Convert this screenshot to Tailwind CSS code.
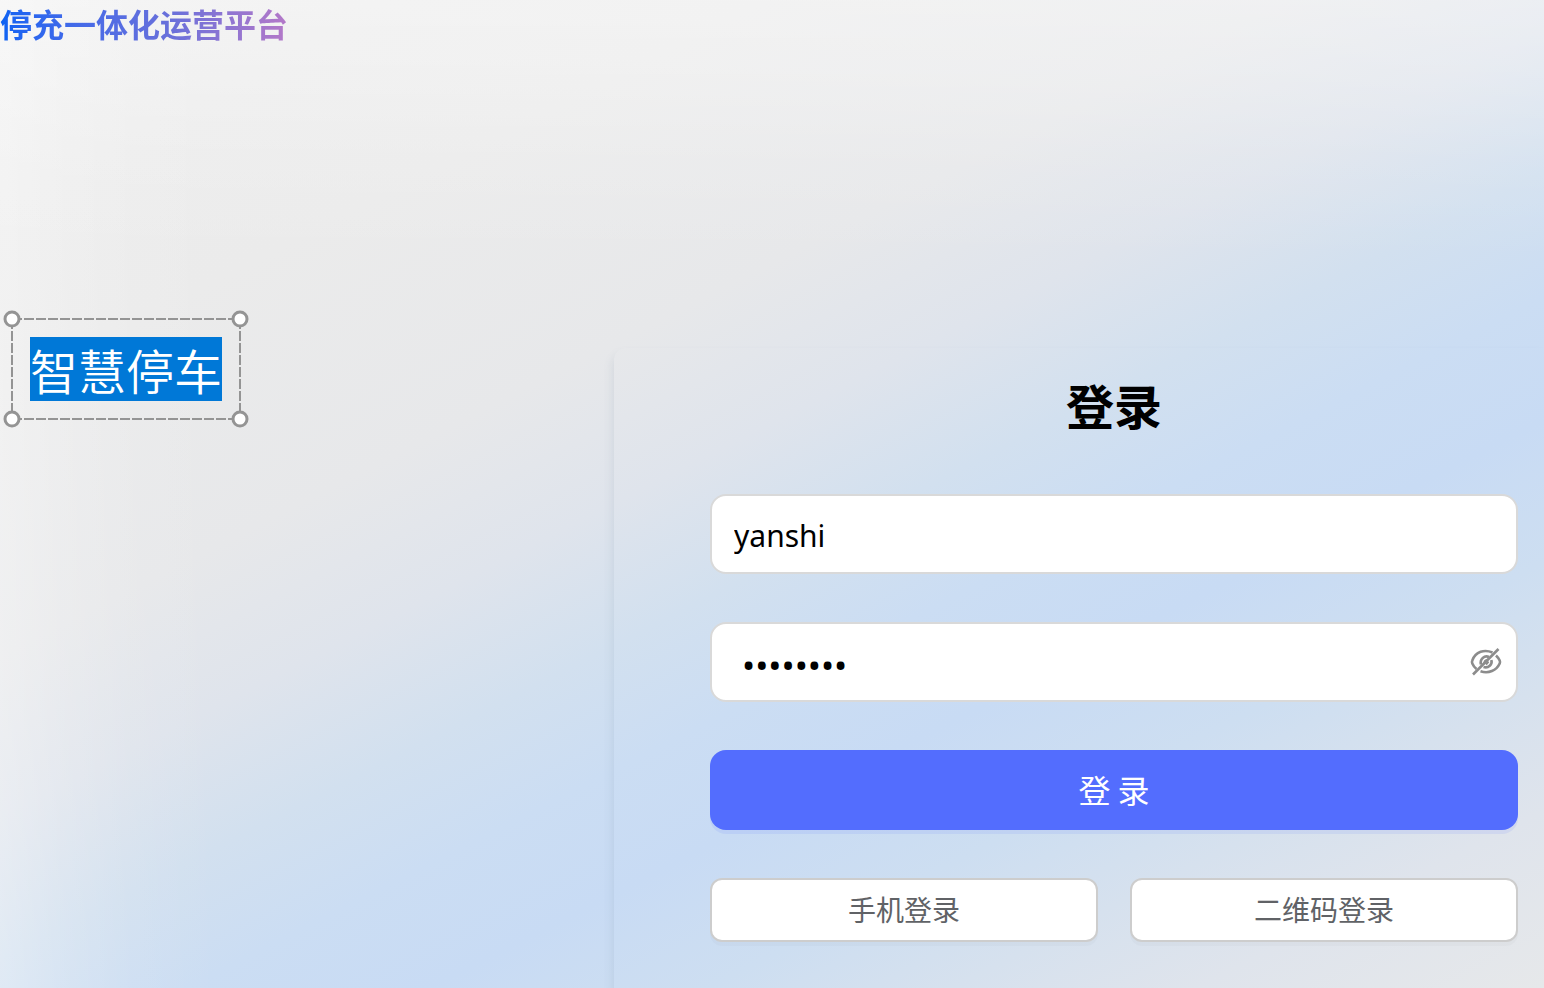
<!DOCTYPE html>
<html lang="zh-CN">
<head>
    <meta charset="UTF-8">
    <meta name="viewport" content="width=device-width, initial-scale=1.0">
    <title>停充一体化运营平台</title>
    <script src="https://cdn.jsdelivr.net/npm/@tailwindcss/browser@4"></script>
</head>
<body class="h-screen overflow-hidden flex flex-col font-['Noto_Sans','Noto_Sans_CJK_SC',sans-serif] bg-[linear-gradient(180deg,#ffffff60_0,#ffffff48_70px,#ffffff1c_160px,#ffffff00_260px),linear-gradient(90deg,#ffffff55_0,#ffffff30_60px,#ffffff12_130px,#ffffff00_220px),linear-gradient(153deg,#ededed_0%,#ebebeb_22%,#e7e8ea_37%,#dfe4ec_46%,#d2e0ef_54%,#cbddf3_61%,#c8dbf4_68%,#cddef1_76%,#d6e1ee_83%,#dfe4ec_90%,#e6e8ea_100%)]">
    <header class="h-[46px] flex items-center">
        <h1 class="text-[32px] leading-12 font-bold font-['Noto_Sans_CJK_SC',sans-serif] text-transparent bg-clip-text bg-linear-to-r from-[#0b63f3] via-[#6a70da] via-60% to-[#b478c8]">停充一体化运营平台</h1>
    </header>

    <main class="flex-1 flex pt-[302px]">
        <section class="w-[614px] shrink-0">
            <!-- Selected text box with resize handles -->
            <div class="relative w-fit ml-3 -mt-[29px] p-[18px]">
                <svg class="absolute inset-0 w-full h-full overflow-visible" fill="none" stroke="#949494">
                    <path d="M0 0H228M0 100H228M0 0V100M228 0V100" stroke-width="2" stroke-dasharray="10 2" />
                    <g fill="#fff" stroke-width="3">
                        <circle cx="0" cy="0" r="7" />
                        <circle cx="228" cy="0" r="7" />
                        <circle cx="0" cy="100" r="7" />
                        <circle cx="228" cy="100" r="7" />
                    </g>
                </svg>
                <p class="relative bg-[#0078d7] text-white text-[48px] leading-16 font-[350] font-['Noto_Sans_CJK_SC',sans-serif]">智慧停车</p>
            </div>
        </section>

        <form class="flex-1 rounded-tl-xl shadow-[-2px_6px_8px_#5c789020] pl-24 pr-[26px] pt-5">
            <h2 class="text-[48px] leading-[72px] font-bold text-center text-black font-['Noto_Sans_CJK_SC',sans-serif]">登录</h2>

            <input type="text" aria-label="账号" value="yanshi" class="mt-[54px] block w-full h-20 px-[22px] pt-0.5 rounded-2xl border-2 border-[#d9d9d9] bg-white text-[30px] text-black outline-none">

            <div class="relative mt-12">
                <input type="password" aria-label="密码" value="12345678" class="block w-full h-20 pl-[30px] pr-16 pt-1 rounded-2xl border-2 border-[#d9d9d9] bg-white text-[35px] text-black outline-none">
                <button type="button" aria-label="显示密码" class="absolute right-4 top-6 size-8 text-[#8c8c8c]">
                    <svg class="size-8" viewBox="0 0 32 32" fill="none" stroke="currentColor" stroke-width="2.6">
                        <path d="M22.500 6.500C14.500 3 5.500 5.500 2.300 14.500 1.800 15.600 1.800 16.400 2.300 17.500 3.200 19.600 4.600 21.500 6.500 23" />
                        <path d="M26 9.500C27.600 11 28.800 12.500 29.700 14.500 30.200 15.600 30.200 16.400 29.700 17.500 26.500 24.500 18.500 28 10.500 25.200" />
                        <path d="M19 11C14.500 9 9.500 13 11 18.500M21.400 14C22.600 18.500 18.500 22.500 13.500 21" />
                        <path d="M17.500 14C15 13.800 14 15.800 14.500 18.200M18.500 15.500 16 18.500" stroke-width="2" />
                        <path d="M28.500 3 3 28.500" />
                    </svg>
                </button>
            </div>

            <button type="submit" class="mt-12 block w-full h-20 pb-0.5 rounded-2xl bg-[#536dfe] shadow-[0_4px_0_#536dfe1a] text-white text-[32px] font-['Noto_Sans_CJK_SC',sans-serif]">登 录</button>

            <div class="mt-12 grid grid-cols-2 gap-8">
                <button type="button" class="h-16 pb-0.5 rounded-xl border-2 border-[#cdcdcd] bg-white shadow-[0_4px_0_#00000005] text-[28px] text-[#606266] font-['Noto_Sans_CJK_SC',sans-serif]">手机登录</button>
                <button type="button" class="h-16 pb-0.5 rounded-xl border-2 border-[#cdcdcd] bg-white shadow-[0_4px_0_#00000005] text-[28px] text-[#606266] font-['Noto_Sans_CJK_SC',sans-serif]">二维码登录</button>
            </div>
        </form>
    </main>
</body>
</html>
